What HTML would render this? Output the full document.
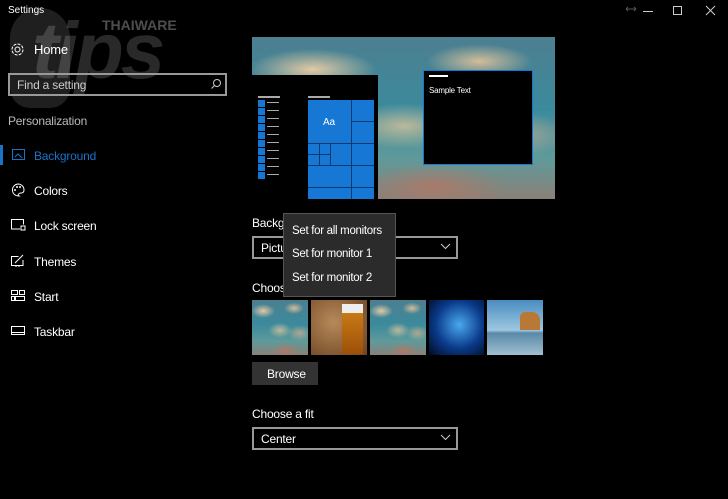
<!DOCTYPE html>
<html><head><meta charset="utf-8"><style>
*{margin:0;padding:0;box-sizing:border-box}
body{width:728px;height:499px;background:#000;color:#fff;font-family:"Liberation Sans",sans-serif;position:relative;overflow:hidden}
.a{position:absolute}
.t{font-size:12px;color:#fff;white-space:nowrap;letter-spacing:-0.2px}
.sky{background:
radial-gradient(ellipse 30% 18% at 20% 20%,rgba(235,205,165,.95),transparent 70%),
radial-gradient(ellipse 25% 15% at 75% 15%,rgba(225,195,155,.9),transparent 70%),
radial-gradient(ellipse 30% 20% at 50% 55%,rgba(215,195,155,.8),transparent 70%),
radial-gradient(ellipse 30% 20% at 85% 60%,rgba(205,175,145,.75),transparent 70%),
radial-gradient(ellipse 35% 20% at 60% 92%,rgba(180,120,100,.8),transparent 70%),
linear-gradient(180deg,#4c7f90 0%,#3b8a9c 45%,#5f9a9a 75%,#8a8078 100%)}
svg{position:absolute}
</style></head><body>
<div class="a" style="left:10px;top:8px;width:60px;height:100px;border-radius:30px 30px 20px 20px;background:rgba(255,255,255,.12)"></div>
<div class="a" style="left:32px;top:-4px;font-size:80px;font-weight:bold;font-style:italic;color:rgba(255,255,255,.16);letter-spacing:-3px;line-height:110px">tips</div>
<div class="a" style="left:102px;top:17px;font-size:14px;font-weight:bold;color:rgba(255,255,255,.3)">THAIWARE</div>

<div class="a" style="left:8px;top:5px;font-size:10px;color:#fff">Settings</div>
<svg style="left:625px;top:6px" width="12" height="6"><path d="M1 3h10M1 3l2-2M1 3l2 2M11 3l-2-2M11 3l-2 2" stroke="#555" fill="none"/></svg>
<div class="a" style="left:643px;top:11px;width:10px;height:1px;background:#ccc"></div>
<div class="a" style="left:673px;top:6px;width:9px;height:9px;border:1px solid #ccc"></div>
<svg style="left:705px;top:5px" width="11" height="11"><path d="M1 1l9 9M10 1l-9 9" stroke="#ccc"/></svg>

<svg style="left:10px;top:42px" width="15" height="15"><circle cx="7.5" cy="7.5" r="2.5" stroke="#fff" fill="none"/><circle cx="7.5" cy="7.5" r="5.5" stroke="#fff" fill="none" stroke-dasharray="3 1.3"/></svg>
<div class="a t" style="left:34px;top:42px;font-size:13px">Home</div>
<div class="a" style="left:8px;top:73px;width:219px;height:23px;border:2px solid #999"></div>
<div class="a t" style="left:17px;top:78px;color:#ccc">Find a setting</div>
<svg style="left:210px;top:78px" width="12" height="12"><circle cx="7" cy="5" r="3.5" stroke="#ccc" fill="none"/><path d="M4.5 7.5l-3 3" stroke="#ccc"/></svg>
<div class="a t" style="left:8px;top:114px;color:#bbb">Personalization</div>

<div class="a" style="left:0;top:145px;width:3px;height:20px;background:#1a73c7"></div>
<svg style="left:12px;top:149px" width="14" height="12"><rect x=".5" y=".5" width="12" height="10" stroke="#1a73c7" fill="none"/><path d="M3 8l3-3 4 4" stroke="#1a73c7" fill="none"/></svg>
<div class="a t" style="left:34px;top:149px;color:#1a73c7">Background</div>
<svg style="left:11px;top:183px" width="14" height="14"><path d="M7 1a6 6 0 1 0 1 12c-2-1 0-3 2-3 2 0 3-1 3-3A6 6 0 0 0 7 1z" stroke="#fff" fill="none"/><circle cx="4" cy="7" r="1" fill="#fff"/><circle cx="6" cy="4" r="1" fill="#fff"/><circle cx="9" cy="4" r="1" fill="#fff"/></svg>
<div class="a t" style="left:34px;top:184px">Colors</div>
<svg style="left:11px;top:219px" width="15" height="12"><path d="M9 10H.5V.5h12v5" stroke="#fff" fill="none"/><rect x="10" y="7" width="4" height="4" stroke="#fff" fill="none"/></svg>
<div class="a t" style="left:34px;top:219px">Lock screen</div>
<svg style="left:11px;top:254px" width="15" height="13"><path d="M12 6v5.5H.5V2.5h7" stroke="#fff" fill="none"/><path d="M4 9l8-8M5 12v1M8 12v1" stroke="#fff"/></svg>
<div class="a t" style="left:34px;top:255px">Themes</div>
<svg style="left:11px;top:290px" width="15" height="12"><rect x=".5" y=".5" width="6" height="4" stroke="#fff" fill="none"/><rect x="8.5" y=".5" width="5" height="4" stroke="#fff" fill="none"/><rect x=".5" y="6.5" width="3" height="4" stroke="#fff" fill="none"/><rect x="4.5" y="6.5" width="9" height="4" stroke="#fff" fill="none"/></svg>
<div class="a t" style="left:34px;top:290px">Start</div>
<svg style="left:11px;top:326px" width="15" height="10"><rect x=".5" y=".5" width="13" height="8" stroke="#fff" fill="none"/><path d="M1 6.5h12" stroke="#fff"/></svg>
<div class="a t" style="left:34px;top:325px">Taskbar</div>

<div class="a sky" style="left:252px;top:37px;width:303px;height:162px"></div>
<div class="a" style="left:252px;top:75px;width:126px;height:124px;background:#000"></div>
<div class="a" style="left:258px;top:96px;width:22px;height:2px;background:#aaa"></div>
<div class="a" style="left:258px;top:100px;width:7px;height:80px;background:repeating-linear-gradient(#1777d4 0 7px,#000 7px 8px)"></div>
<div class="a" style="left:267px;top:102px;width:12px;height:76px;background:repeating-linear-gradient(#aaa 0 1px,transparent 1px 8px)"></div>
<div class="a" style="left:308px;top:96px;width:22px;height:2px;background:#aaa"></div>
<div class="a" style="left:308px;top:100px;width:66px;height:99px;background:#1777d4"></div>
<div class="a" style="left:351px;top:100px;width:1px;height:99px;background:#0a3a70"></div>
<div class="a" style="left:308px;top:143px;width:66px;height:1px;background:#0a3a70"></div>
<div class="a" style="left:351px;top:121px;width:23px;height:1px;background:#0a3a70"></div>
<div class="a" style="left:308px;top:165px;width:66px;height:1px;background:#0a3a70"></div>
<div class="a" style="left:308px;top:187px;width:66px;height:1px;background:#0a3a70"></div>
<div class="a" style="left:319px;top:143px;width:1px;height:22px;background:#0a3a70"></div>
<div class="a" style="left:330px;top:143px;width:1px;height:22px;background:#0a3a70"></div>
<div class="a" style="left:308px;top:154px;width:22px;height:1px;background:#0a3a70"></div>
<div class="a t" style="left:323px;top:117px;font-size:10px">Aa</div>
<div class="a" style="left:423px;top:70px;width:110px;height:95px;background:#000;border:1px solid #1777d4"></div>
<div class="a" style="left:429px;top:75px;width:19px;height:2px;background:#fff"></div>
<div class="a t" style="left:429px;top:86px;font-size:8px">Sample Text</div>

<div class="a t" style="left:252px;top:216px">Background</div>
<div class="a" style="left:252px;top:236px;width:206px;height:23px;border:2px solid #999"></div>
<div class="a t" style="left:261px;top:241px">Picture</div>
<svg style="left:440px;top:243px" width="11" height="7"><path d="M1 1l4.5 4.5L10 1" stroke="#ccc" fill="none"/></svg>

<div class="a t" style="left:252px;top:281px">Choose your picture</div>
<div class="a sky" style="left:252px;top:300px;width:56px;height:55px"></div>
<div class="a" style="left:311px;top:300px;width:56px;height:55px;background:radial-gradient(ellipse at 40% 40%,#b88a5a,#6a4322)"></div>
<div class="a" style="left:342px;top:304px;width:21px;height:50px;background:linear-gradient(#eee 0 9px,#c87a15 9px,#9c5008)"></div>
<div class="a sky" style="left:370px;top:300px;width:56px;height:55px"></div>
<div class="a" style="left:429px;top:300px;width:55px;height:55px;background:radial-gradient(ellipse at 55% 45%,#4aa8ee,#0a3a8a 55%,#020a20)"></div>
<div class="a" style="left:487px;top:300px;width:56px;height:55px;background:linear-gradient(#4a8cc0,#9ec8e0 55%,#5a88a8 60%,#a0c0d0)"></div>
<div class="a" style="left:520px;top:312px;width:20px;height:18px;background:#b87836;border-radius:5px 8px 0 0"></div>

<div class="a" style="left:252px;top:362px;width:66px;height:23px;background:#333"></div>
<div class="a t" style="left:267px;top:367px">Browse</div>

<div class="a t" style="left:252px;top:407px">Choose a fit</div>
<div class="a" style="left:252px;top:427px;width:206px;height:23px;border:2px solid #999"></div>
<div class="a t" style="left:261px;top:432px">Center</div>
<svg style="left:440px;top:434px" width="11" height="7"><path d="M1 1l4.5 4.5L10 1" stroke="#ccc" fill="none"/></svg>

<div class="a" style="left:283px;top:213px;width:113px;height:84px;background:#2b2b2b;border:1px solid #555"></div>
<div class="a t" style="left:292px;top:225px;font-size:11.5px;letter-spacing:-0.3px">Set for all monitors</div>
<div class="a t" style="left:292px;top:248px;font-size:11.5px;letter-spacing:-0.3px">Set for monitor 1</div>
<div class="a t" style="left:292px;top:272px;font-size:11.5px;letter-spacing:-0.3px">Set for monitor 2</div>
</body></html>
